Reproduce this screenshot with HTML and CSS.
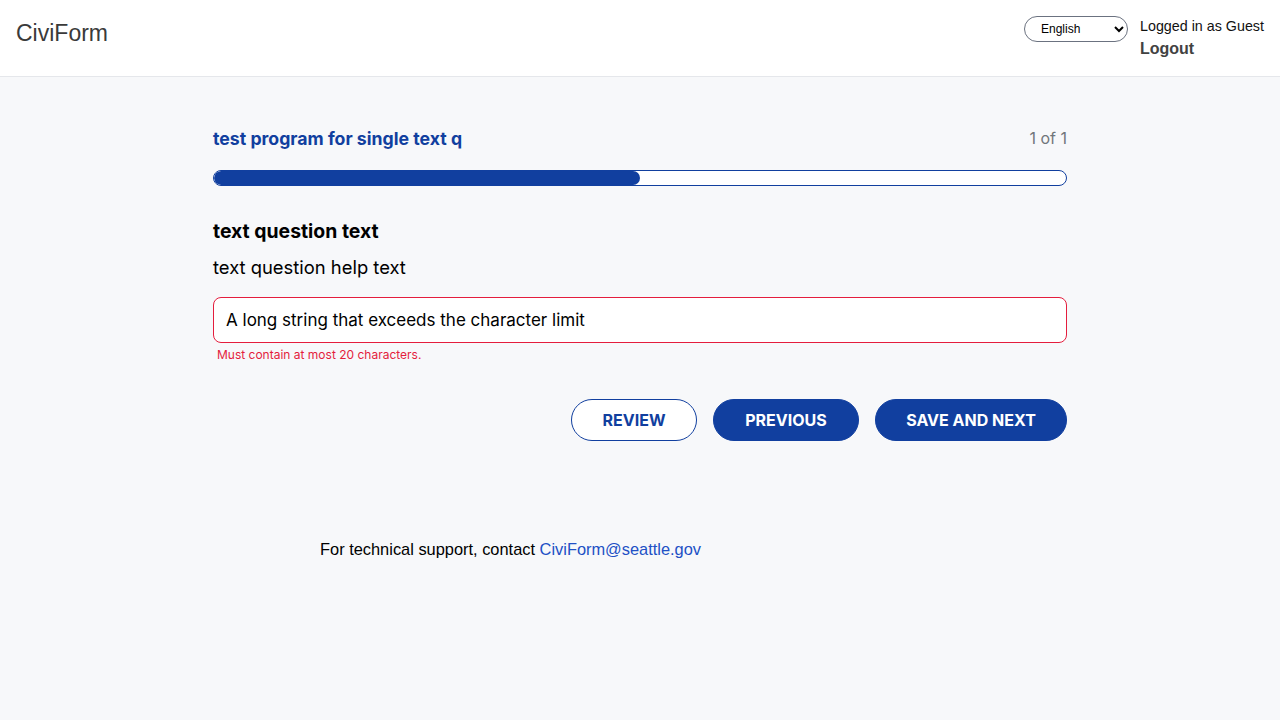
FILE: index.html
```html
<!DOCTYPE html>
<html lang="en">
<head>
<meta charset="utf-8">
<title>CiviForm</title>
<link rel="stylesheet" href="styles.css">
</head>
<body>
<header class="topbar">
  <div class="brand">CiviForm</div>
  <div class="account">
    <select class="lang"><option>English</option></select>
    <div class="user">
      <div class="user-name">Logged in as Guest</div>
      <a class="logout" href="#">Logout</a>
    </div>
  </div>
</header>
<main class="main">
  <section class="form-card">
    <div class="prog-head">
      <h1 class="prog-title">test program for single text q</h1>
      <span class="prog-count">1 of 1</span>
    </div>
    <div class="progress"><div class="progress-fill" style="width:50%"></div></div>
    <h2 class="question">text question text</h2>
    <p class="help">text question help text</p>
    <div class="field">
      <input class="text-input" type="text" value="A long string that exceeds the character limit">
      <div class="error">Must contain at most 20 characters.</div>
    </div>
    <div class="actions">
      <button class="btn btn-outline">REVIEW</button>
      <button class="btn btn-solid btn-prev">PREVIOUS</button>
      <button class="btn btn-solid btn-next">SAVE AND NEXT</button>
    </div>
  </section>
  <footer class="support">For technical support, contact <a href="#">CiviForm@seattle.gov</a></footer>
</main>
</body>
</html>
```
FILE: styles.css
```css
* { box-sizing: border-box; }
html, body { margin: 0; height: 100%; }
body {
  font-family: Inter, "Noto Sans", sans-serif;
  background: #f7f8fa;
  color: #000;
}
.topbar {
  height: 77px;
  background: #fff;
  border-bottom: 1px solid #e5e7eb;
  display: flex;
  justify-content: space-between;
  align-items: flex-start;
  padding: 0 16px;
  font-family: "Liberation Sans", Arial, sans-serif;
}
.brand {
  font-size: 23px;
  color: #3a3a3a;
  margin-top: 20px;
}
.account {
  display: flex;
  align-items: flex-start;
  margin-top: 16px;
  gap: 12px;
}
.lang {
  width: 104px;
  height: 26px;
  border: 1px solid #6b7280;
  border-radius: 13px;
  background: #fff;
  font-family: "Liberation Sans", Arial, sans-serif;
  font-size: 12px;
  padding: 0 4px 0 12px;
  color: #000;
}
.user { font-size: 14.3px; line-height: 20px; width: 124px; }
.user-name { color: #111; white-space: nowrap; }
.logout {
  display: block;
  font-size: 16px;
  font-weight: 700;
  color: #424242;
  text-decoration: none;
  margin-top: 3px;
}
.main { padding-top: 49px; }
.form-card {
  width: 854px;
  margin: 0 auto;
}
.prog-head {
  display: flex;
  justify-content: space-between;
  align-items: center;
  height: 24px;
}
.prog-title {
  margin: 0;
  font-size: 17.7px;
  font-weight: 700;
  color: #113f9f;
}
.prog-count { font-size: 16px; color: #71767a; }
.progress {
  margin-top: 20px;
  height: 16px;
  border: 1px solid #113f9f;
  border-radius: 8px;
  background: #fff;
  overflow: hidden;
}
.progress-fill {
  height: 100%;
  background: #113f9f;
  border-radius: 8px;
}
.question {
  margin: 33px 0 0;
  font-size: 19.4px;
  font-weight: 700;
  line-height: 24px;
}
.help {
  margin: 12px 0 0;
  font-size: 18.4px;
  line-height: 24px;
}
.field { margin-top: 18px; }
.text-input {
  display: block;
  width: 100%;
  height: 46px;
  border: 1px solid #e41d3d;
  border-radius: 8px;
  background: #fff;
  font-family: Inter, sans-serif;
  font-size: 17px;
  padding: 0 12px;
  color: #000;
}
.error {
  color: #e41d3d;
  font-size: 12px;
  margin: 4px 0 0 4px;
  line-height: 16px;
}
.actions {
  display: flex;
  justify-content: flex-end;
  gap: 16px;
  margin-top: 36px;
}
.btn {
  height: 42px;
  border-radius: 21px;
  font-family: Inter, sans-serif;
  font-size: 16px;
  font-weight: 700;
  border: 1px solid #113f9f;
  cursor: pointer;
}
.btn-outline { width: 126px; background: #fff; color: #113f9f; }
.btn-solid { background: #113f9f; color: #fff; }
.btn-prev { width: 146px; }
.btn-next { width: 192px; }
.support {
  margin: 98px 0 0 320px;
  font-family: "Liberation Sans", Arial, sans-serif;
  font-size: 16.4px;
  line-height: 20px;
}
.support a { color: #2150c5; text-decoration: none; }
```
